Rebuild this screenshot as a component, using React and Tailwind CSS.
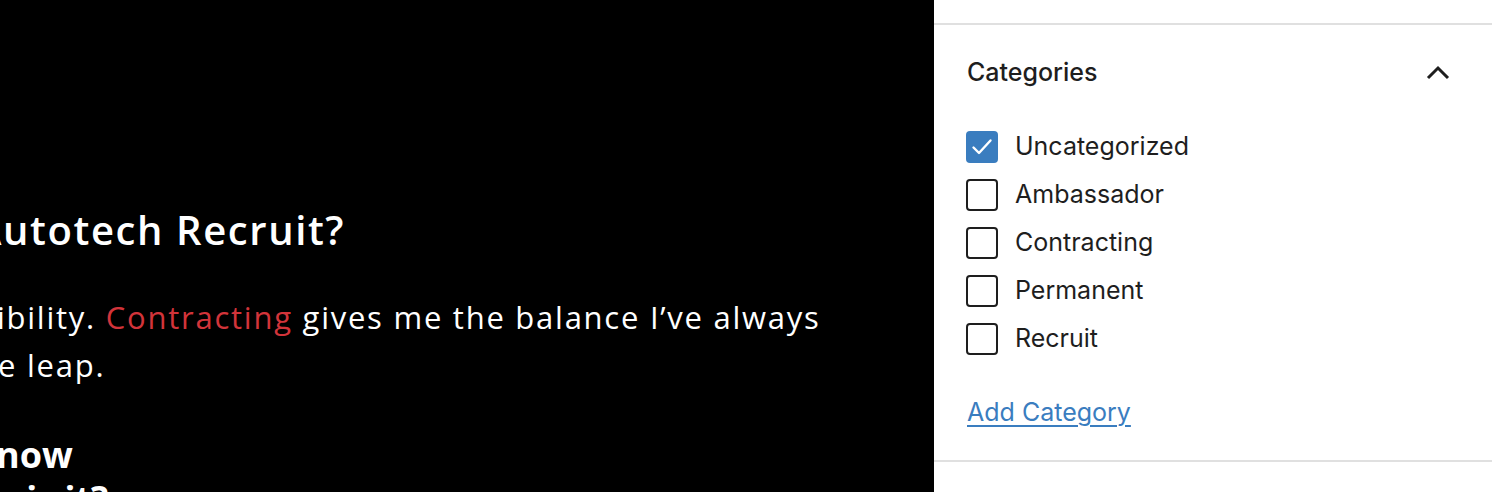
import React from "react";

const cats = [
  { name: "Uncategorized", checked: true },
  { name: "Ambassador" },
  { name: "Contracting" },
  { name: "Permanent" },
  { name: "Recruit" },
];

function Box({ checked }) {
  if (checked) {
    return (
      <span className="flex h-[32px] w-[32px] shrink-0 items-center justify-center rounded-[4px] bg-[#3a7dbf]">
        <svg width="32" height="32" viewBox="0 0 32 32" fill="none">
          <path d="M7.5 16.5 L13 22 L24.5 9.5" stroke="#fff" strokeWidth="2.4" strokeLinecap="round" strokeLinejoin="round" />
        </svg>
      </span>
    );
  }
  return <span className="block h-[32px] w-[32px] shrink-0 rounded-[4px] border-2 border-[#1e1e1e] bg-white" />;
}

export default function App() {
  return (
    <div className="flex h-[492px] w-[1492px] overflow-hidden">
      <div
        className="flex h-full w-[934px] shrink-0 flex-col overflow-hidden bg-black text-white"
        style={{ fontFamily: '"Open Sans", "DejaVu Sans", sans-serif' }}
      >
        <div className="mt-[204px] -ml-[25px] whitespace-nowrap text-[40px] font-semibold leading-[52px] tracking-[1.6px]">
          Autotech Recruit?
        </div>
        <div className="mt-[37px] flex flex-col whitespace-nowrap text-[31px] font-normal leading-[48px] tracking-[1.75px]">
          <div className="-ml-[3px]">
            ibility. <span className="text-[#d2343a]">Contracting</span> gives me the balance I’ve always
          </div>
          <div className="-ml-[2px]">e leap.</div>
        </div>
        <div className="mt-[44px] flex flex-col whitespace-nowrap text-[36px] font-bold leading-[44px]">
          <div className="-ml-[4px]">now</div>
          <div className="-ml-[14px]">w is it?</div>
        </div>
      </div>
      <div
        className="flex h-full flex-1 flex-col bg-white text-[#1e1e1e]"
        style={{ fontFamily: 'Inter, "Noto Sans", sans-serif' }}
      >
        <div className="mt-[23px] border-t-2 border-[#e0e0e0]" />
        <div className="flex h-[96px] items-center justify-between pl-[33px] pr-[42px]">
          <span className="text-[25px] font-medium">Categories</span>
          <svg width="24" height="16" viewBox="0 0 24 16" fill="none">
            <path d="M2 13 L12 3 L22 13" stroke="#1e1e1e" strokeWidth="3" />
          </svg>
        </div>
        <div className="mt-[2px] flex flex-col pl-[32px]">
          {cats.map((c) => (
            <div key={c.name} className="flex h-[48px] items-center gap-[17px]">
              <Box checked={c.checked} />
              <span className="text-[25px]">{c.name}</span>
            </div>
          ))}
        </div>
        <div className="mt-[25px] pl-[33px] text-[25px] leading-[48px]">
          <a href="#" className="text-[#3a7dbf] underline underline-offset-[4px] decoration-[2px]">
            Add Category
          </a>
        </div>
        <div className="mt-[24px] border-t-2 border-[#e0e0e0]" />
      </div>
    </div>
  );
}
